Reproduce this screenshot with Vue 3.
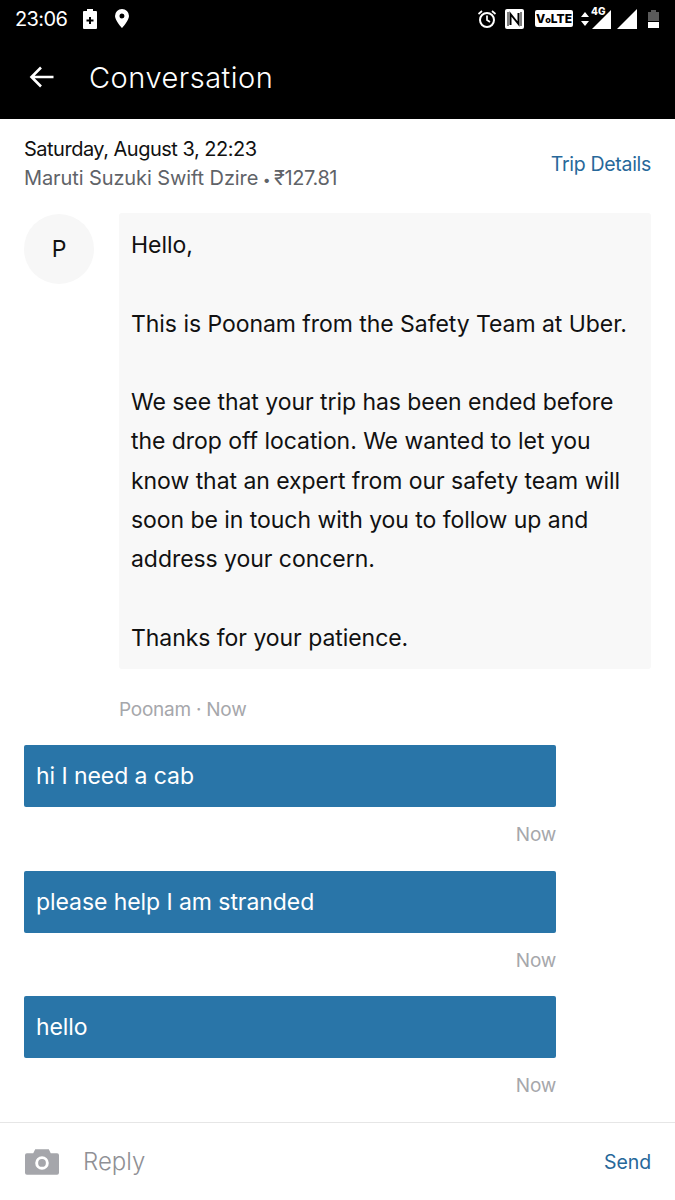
<script setup>
const lines = [
  'Hello,',
  '',
  'This is Poonam from the Safety Team at Uber.',
  '',
  'We see that your trip has been ended before',
  'the drop off location. We wanted to let you',
  'know that an expert from our safety team will',
  'soon be in touch with you to follow up and',
  'address your concern.',
  '',
  'Thanks for your patience.'
]
const sent = ['hi I need a cab', 'please help I am stranded', 'hello']
</script>

<template>
  <div class="screen">
    <div class="top">
      <div class="status">
        <span class="clock">23:06</span>
        <svg class="ic" width="14" height="20" viewBox="0 0 14 20"><path fill="#fff" d="M4 0h6v2h3a1 1 0 0 1 1 1v16a1 1 0 0 1-1 1H1a1 1 0 0 1-1-1V3a1 1 0 0 1 1-1h3z"/><path fill="#000" d="M6 8h2v2.500h2.500v2H8V15H6v-2.500H3.500v-2H6z"/></svg>
        <svg class="ic pin" width="14" height="19" viewBox="0 0 14 19"><path fill="#fff" fill-rule="evenodd" d="M7 0a7 7 0 0 1 7 7c0 4.500-7 12-7 12S0 11.500 0 7a7 7 0 0 1 7-7zm0 4.500a2.500 2.500 0 1 0 0 5 2.500 2.500 0 0 0 0-5z"/></svg>
        <div class="spacer"></div>
        <svg width="20" height="20" viewBox="0 0 20 20" fill="none" stroke="#fff"><circle cx="10" cy="11" r="7" stroke-width="2"/><path stroke-width="1.700" d="M10 6.500V11l3 2M1.500 5 5 2M18.500 5 15 2"/></svg>
        <svg class="nfc" width="19" height="20" viewBox="0 0 19 20"><rect width="19" height="20" rx="2" fill="#fff"/><path fill="none" stroke="#000" stroke-width="2" d="M5.500 16V5l8 10V4"/><path fill="none" stroke="#000" stroke-width="1" d="M3 3v14M16 3v14"/></svg>
        <span class="volte">V<i>o</i>LTE</span>
        <div class="net">
          <svg width="8" height="14" viewBox="0 0 8 14"><path fill="#fff" d="M4 0l4 5H0zM4 14 0 9h8z"/></svg>
          <span class="g4">4G</span>
          <svg class="sig" width="19" height="19" viewBox="0 0 19 19"><path fill="#fff" d="M19 0v19H0z"/></svg>
        </div>
        <svg class="sig2" width="20" height="20" viewBox="0 0 20 20"><path fill="#fff" d="M20 0v20H0z"/></svg>
        <svg class="bat" width="11" height="18" viewBox="0 0 11 18"><path fill="#5a5a5a" d="M3 0h5v2h3v9H0V2h3z"/><path fill="#fff" d="M0 12h11v6H0z"/></svg>
      </div>
      <div class="appbar">
        <svg width="26" height="24" viewBox="0 0 26 24" fill="none" stroke="#fff" stroke-width="2.600"><path d="M24.500 12H2.500M12 2.500 2.500 12l9.500 9.500"/></svg>
        <span class="title">Conversation</span>
      </div>
    </div>

    <div class="trip">
      <div>
        <div class="date">Saturday, August 3, 22:23</div>
        <div class="car">Maruti Suzuki Swift Dzire <span class="dot">•</span> <span class="fare">₹127.81</span></div>
      </div>
      <a class="details">Trip Details</a>
    </div>

    <div class="thread">
      <div class="incoming">
        <div class="avatar">P</div>
        <div class="bubble">
          <div v-for="(line, i) in lines" :key="i" class="line">{{ line }}</div>
        </div>
      </div>
      <div class="meta from">Poonam · Now</div>
      <div v-for="msg in sent" :key="msg" class="sent">
        <div class="out">{{ msg }}</div>
        <div class="meta now">Now</div>
      </div>
    </div>

    <div class="reply">
      <svg width="34" height="26" viewBox="0 0 35 26"><path fill="#a5a6ab" fill-rule="evenodd" d="M10.500 0h14l2 4H33a2 2 0 0 1 2 2v18a2 2 0 0 1-2 2H2a2 2 0 0 1-2-2V6a2 2 0 0 1 2-2h6.500zM17.500 7a7 7 0 1 0 0 14 7 7 0 0 0 0-14z"/><circle cx="17.500" cy="14" r="4" fill="#a5a6ab"/></svg>
      <span class="ph">Reply</span>
      <span class="send">Send</span>
    </div>
  </div>
</template>

<style scoped>
.screen {
  width: 675px;
  height: 1200px;
  overflow: hidden;
  background: #fff;
  font-family: Inter, "Noto Sans", sans-serif;
  color: #111;
  display: flex;
  flex-direction: column;
}
.top {
  height: 119px;
  background: #000;
  color: #fff;
}
.status {
  height: 37px;
  display: flex;
  align-items: center;
  padding: 0 16px 0 15px;
}
.clock {
  font-size: 20px;
  letter-spacing: -0.6px;
  margin-right: 16px;
}
.pin {
  margin-left: 18px;
}
.spacer {
  flex: 1;
}
.nfc {
  margin-left: 8px;
}
.volte {
  margin-left: 11px;
  width: 38px;
  height: 17px;
  background: #fff;
  color: #000;
  border-radius: 2px;
  font-size: 12px;
  font-weight: 800;
  line-height: 17px;
  text-align: center;
}
.volte i {
  font-style: normal;
  font-size: 9px;
}
.net {
  position: relative;
  display: flex;
  align-items: center;
  gap: 3px;
  margin-left: 8px;
}
.sig {
  margin-top: 1px;
}
.g4 {
  position: absolute;
  left: 10px;
  top: -4px;
  font-size: 10px;
  font-weight: 800;
}
.sig2 {
  margin-left: 6px;
}
.bat {
  margin-left: 11px;
}
.appbar {
  display: flex;
  align-items: center;
  height: 80px;
  padding-left: 29px;
}
.title {
  margin-left: 34px;
  font-size: 29px;
  font-weight: 300;
  letter-spacing: 0.5px;
}
.trip {
  display: flex;
  justify-content: space-between;
  align-items: center;
  padding: 16px 24px 0;
}
.date {
  font-size: 20px;
  line-height: 29px;
  letter-spacing: -0.5px;
}
.car {
  height: 28px;
  font-size: 20px;
  line-height: 28px;
  letter-spacing: -0.1px;
  color: #5f6368;
}
.dot {
  font-size: 14px;
  margin: 0 -2px 0 -1px;
}
.fare {
  letter-spacing: -0.4px;
}
.details {
  color: #27689a;
  font-size: 19.500px;
  letter-spacing: -0.3px;
}
.thread {
  flex: 1;
  padding: 21px 24px 0;
}
.incoming {
  display: flex;
  align-items: flex-start;
  gap: 25px;
}
.avatar {
  flex: none;
  width: 70px;
  height: 70px;
  margin-top: 1px;
  border-radius: 50%;
  background: #f7f7f7;
  display: flex;
  align-items: center;
  justify-content: center;
  font-size: 23px;
}
.bubble {
  flex: 1;
  padding: 13px 12px 11px;
  background: #f8f8f8;
  border-radius: 3px;
}
.line {
  height: 39.300px;
  line-height: 39.300px;
  font-size: 23px;
  white-space: nowrap;
  letter-spacing: -0.05px;
}
.meta {
  color: #a6a7ab;
  font-size: 19px;
  letter-spacing: -0.25px;
}
.from {
  margin: 29px 0 0 95px;
  line-height: 24px;
}
.sent {
  width: 532px;
}
.out {
  height: 62px;
  margin-top: 24px;
  padding-left: 12px;
  line-height: 62px;
  font-size: 23px;
  letter-spacing: -0.07px;
  color: #fff;
  background: #2975a8;
  border-radius: 2px;
}
.now {
  margin-top: 16px;
  margin-bottom: -0.5px;
  line-height: 24px;
  text-align: right;
}
.from + .sent .out {
  margin-top: 23px;
}
.reply {
  flex: none;
  height: 78px;
  box-sizing: border-box;
  border-top: 1px solid #e6e6e6;
  display: flex;
  align-items: center;
  padding: 0 24px 0 25px;
}
.ph {
  margin-left: 24px;
  font-size: 24px;
  font-weight: 300;
  color: #8f9095;
  flex: 1;
}
.send {
  font-size: 19.500px;
  letter-spacing: -0.1px;
  color: #27689a;
}
</style>
